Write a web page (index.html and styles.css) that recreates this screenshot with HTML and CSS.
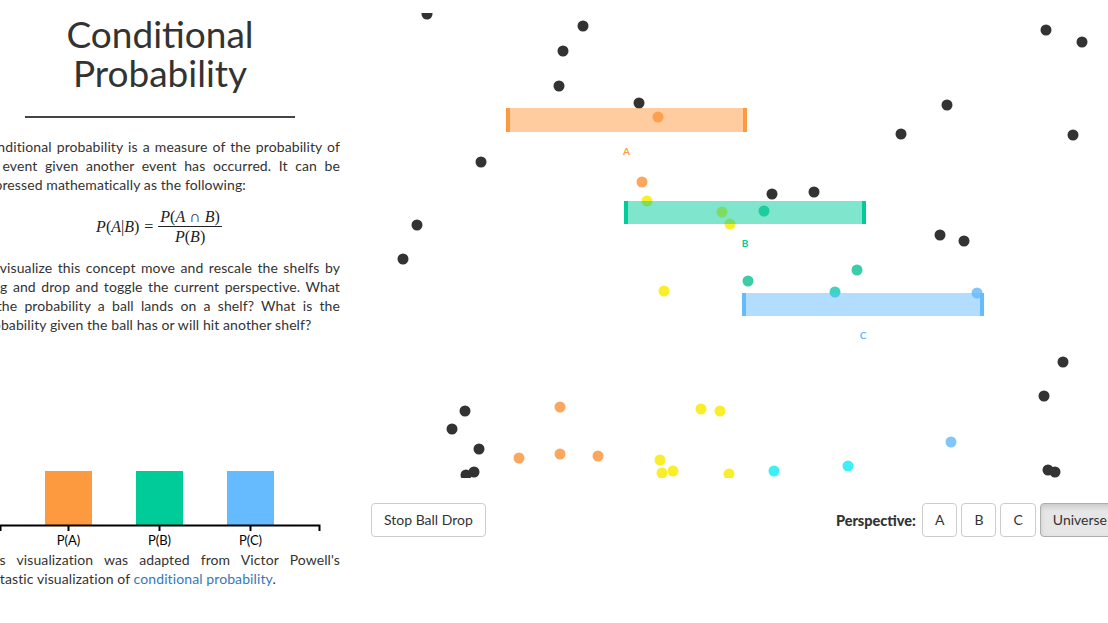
FILE: index.html
```html
<!DOCTYPE html>
<html lang="en">
<head>
<meta charset="utf-8">
<title>Conditional Probability</title>
<link rel="stylesheet" href="styles.css">
</head>
<body>
<div class="page">
  <aside class="intro">
    <h1 class="title">Conditional Probability</h1>
    <hr class="rule">
    <p class="copy copy-first">Conditional probability is a measure of the probability of an event given another event has occurred. It can be expressed mathematically as the following:</p>
    <div class="formula">
      <span class="lhs"><i>P</i>(<i>A</i>|<i>B</i>)</span>
      <span class="eq">=</span>
      <span class="frac">
        <span class="num"><i>P</i>(<i>A</i> ∩ <i>B</i>)</span>
        <span class="den"><i>P</i>(<i>B</i>)</span>
      </span>
    </div>
    <p class="copy copy-tight">To visualize this concept move and rescale the shelfs by drag and drop and toggle the current perspective. What is&nbsp;the probability a ball lands on a shelf? What is the probability given the ball has or will hit another shelf?</p>

    <svg class="chart" width="360" height="100" viewBox="-20 449 360 100">
      <rect x="45" y="471" width="47" height="54" fill="#fd9a40"/>
      <rect x="136" y="471" width="47" height="54" fill="#00cc99"/>
      <rect x="227" y="471" width="47" height="54" fill="#66bbff"/>
      <path class="axis" d="M0.5,531V525.5H319.5V531"/>
      <line class="axis" x1="68.5" y1="525" x2="68.5" y2="531"/>
      <line class="axis" x1="159.5" y1="525" x2="159.5" y2="531"/>
      <line class="axis" x1="250.5" y1="525" x2="250.5" y2="531"/>
      <text class="tick-label" x="68.5" y="544.5">P(A)</text>
      <text class="tick-label" x="159.5" y="544.5">P(B)</text>
      <text class="tick-label" x="250.5" y="544.5">P(C)</text>
    </svg>

    <p class="copy credit">This visualization was adapted from Victor Powell's fantastic visualization of <a href="#">conditional probability</a>.</p>
  </aside>

  <main class="stage">
    <svg class="sim" width="762" height="465" viewBox="360 13 762 465">
      <g fill="#333">
        <circle cx="427" cy="14" r="5.5"/>
        <circle cx="583" cy="26" r="5.5"/>
        <circle cx="563" cy="51" r="5.5"/>
        <circle cx="559" cy="86" r="5.5"/>
        <circle cx="639" cy="103" r="5.5"/>
        <circle cx="481" cy="162" r="5.5"/>
        <circle cx="417" cy="225" r="5.5"/>
        <circle cx="403" cy="259" r="5.5"/>
        <circle cx="772" cy="194" r="5.5"/>
        <circle cx="814" cy="192" r="5.5"/>
        <circle cx="947" cy="105" r="5.5"/>
        <circle cx="901" cy="134" r="5.5"/>
        <circle cx="1046" cy="30" r="5.5"/>
        <circle cx="1082" cy="42" r="5.5"/>
        <circle cx="1073" cy="135" r="5.5"/>
        <circle cx="940" cy="235" r="5.5"/>
        <circle cx="964" cy="241" r="5.5"/>
        <circle cx="1063" cy="362" r="5.5"/>
        <circle cx="1044" cy="396" r="5.5"/>
        <circle cx="1048" cy="470" r="5.5"/>
        <circle cx="1055" cy="472" r="5.5"/>
        <circle cx="465" cy="411" r="5.5"/>
        <circle cx="452" cy="429" r="5.5"/>
        <circle cx="479" cy="449" r="5.5"/>
        <circle cx="474" cy="472" r="5.5"/>
        <circle cx="466" cy="475" r="5.5"/>
      </g>
      <g fill="#fca65e">
        <circle cx="658" cy="117" r="5.5"/>
        <circle cx="642" cy="182" r="5.5"/>
        <circle cx="560" cy="407" r="5.5"/>
        <circle cx="519" cy="458" r="5.5"/>
        <circle cx="560" cy="454" r="5.5"/>
        <circle cx="598" cy="456" r="5.5"/>
      </g>
      <g fill="#f8ef2a">
        <circle cx="647" cy="201" r="5.5"/>
        <circle cx="722" cy="212" r="5.5"/>
        <circle cx="730" cy="224" r="5.5"/>
        <circle cx="664" cy="291" r="5.5"/>
        <circle cx="701" cy="409" r="5.5"/>
        <circle cx="720" cy="411" r="5.5"/>
        <circle cx="660" cy="460" r="5.5"/>
        <circle cx="662" cy="473" r="5.5"/>
        <circle cx="673" cy="471" r="5.5"/>
        <circle cx="729" cy="474" r="5.5"/>
      </g>
      <g fill="#3ccda6">
        <circle cx="764" cy="211" r="5.5"/>
        <circle cx="748" cy="281" r="5.5"/>
        <circle cx="857" cy="270" r="5.5"/>
      </g>
      <circle cx="835" cy="292" r="5.5" fill="#3dd3c0"/>
      <g fill="#3ef0f5">
        <circle cx="774" cy="471" r="5.5"/>
        <circle cx="848" cy="466" r="5.5"/>
      </g>
      <g fill="#82c5f9">
        <circle cx="951" cy="442" r="5.5"/>
        <circle cx="977" cy="293" r="5.5"/>
      </g>

      <!-- shelf A -->
      <g class="shelf" fill="#fd9a40">
        <rect class="shelf-body" x="506" y="108" width="241" height="24"/>
        <rect x="506" y="108" width="4" height="24"/>
        <rect x="743" y="108" width="4" height="24"/>
        <text class="shelf-label" x="626.5" y="155">A</text>
      </g>
      <!-- shelf B -->
      <g class="shelf" fill="#00cc99">
        <rect class="shelf-body" x="624" y="201" width="242" height="23"/>
        <rect x="624" y="201" width="4" height="23"/>
        <rect x="862" y="201" width="4" height="23"/>
        <text class="shelf-label" x="745" y="247">B</text>
      </g>
      <!-- shelf C -->
      <g class="shelf" fill="#66bbff">
        <rect class="shelf-body" x="742" y="293" width="242" height="23"/>
        <rect x="742" y="293" width="4" height="23"/>
        <rect x="980" y="293" width="4" height="23"/>
        <text class="shelf-label" x="863" y="339">C</text>
      </g>
    </svg>

    <div class="controls">
      <button class="btn" type="button">Stop Ball Drop</button>
      <div class="perspective">
        <span class="perspective-label">Perspective:</span>
        <button class="btn" type="button">A</button>
        <button class="btn" type="button">B</button>
        <button class="btn" type="button">C</button>
        <button class="btn active" type="button">Universe</button>
      </div>
    </div>
  </main>
</div>
</body>
</html>
```

FILE: styles.css
```css
html,
body {
  margin: 0;
  padding: 0;
}

body {
  font-family: Lato, "Open Sans", sans-serif;
  color: #333;
  background: #fff;
  overflow: hidden;
}

.page {
  display: flex;
  gap: 20px;
  margin-left: -20px;
  width: 1142px;
}

/* left column: title, explanation and probability bars */
.intro {
  width: 360px;
  flex: none;
}

.title {
  margin: 14px 0 0;
  font-size: 37px;
  line-height: 39px;
  font-weight: 400;
  text-align: center;
  color: #333;
}

.rule {
  width: 75%;
  height: 0;
  margin: 24px auto 0;
  border: 0;
  border-top: 2px solid #444;
}

.copy {
  margin: 0;
  font-size: 14px;
  line-height: 19px;
  letter-spacing: 0.1px;
  text-align: justify;
}

.copy-first {
  margin-top: 19px;
}

.copy-tight {
  margin-top: 13px;
}

.copy a {
  color: #337ab7;
  text-decoration: none;
}

.formula {
  display: flex;
  justify-content: center;
  align-items: center;
  margin-top: 15px;
  padding-right: 2px;
  font-family: "Liberation Serif", serif;
  font-size: 16px;
  color: #222;
}

.eq {
  margin: 0 5px;
}

.frac {
  display: inline-flex;
  flex-direction: column;
  align-items: center;
}

.num,
.den {
  line-height: 16px;
  padding: 0 2px;
}

.num {
  padding-bottom: 1px;
  border-bottom: 1px solid #222;
}

.den {
  padding-top: 2px;
}

.chart {
  display: block;
  margin-top: 115px;
}

.axis {
  fill: none;
  stroke: #000;
  stroke-width: 2;
}

.tick-label {
  font-family: Lato, sans-serif;
  font-size: 13px;
  text-anchor: middle;
  fill: #000;
}

.credit {
  margin-top: 1px;
}

/* right column: ball drop canvas and controls */
.stage {
  width: 760px;
  flex: none;
}

.sim {
  display: block;
  margin-top: 13px;
}

.shelf-body {
  fill-opacity: 0.5;
}

.shelf-label {
  font-family: Lato, sans-serif;
  font-size: 10px;
  font-weight: 700;
  text-anchor: middle;
}

.controls {
  display: flex;
  justify-content: space-between;
  align-items: center;
  margin-top: 25px;
  padding-left: 11px;
}

.perspective {
  display: flex;
  align-items: center;
  gap: 4px;
}

.perspective-label {
  margin-right: 2px;
  font-size: 14.5px;
  font-weight: 900;
}

.btn {
  font-family: inherit;
  font-size: 14px;
  line-height: 20px;
  padding: 6px 12px;
  border: 1px solid #ccc;
  border-radius: 4px;
  background: #fff;
  color: #333;
}

.btn.active {
  background: #e6e6e6;
  border-color: #adadad;
  box-shadow: inset 0 3px 5px rgba(0, 0, 0, 0.125);
}
```
